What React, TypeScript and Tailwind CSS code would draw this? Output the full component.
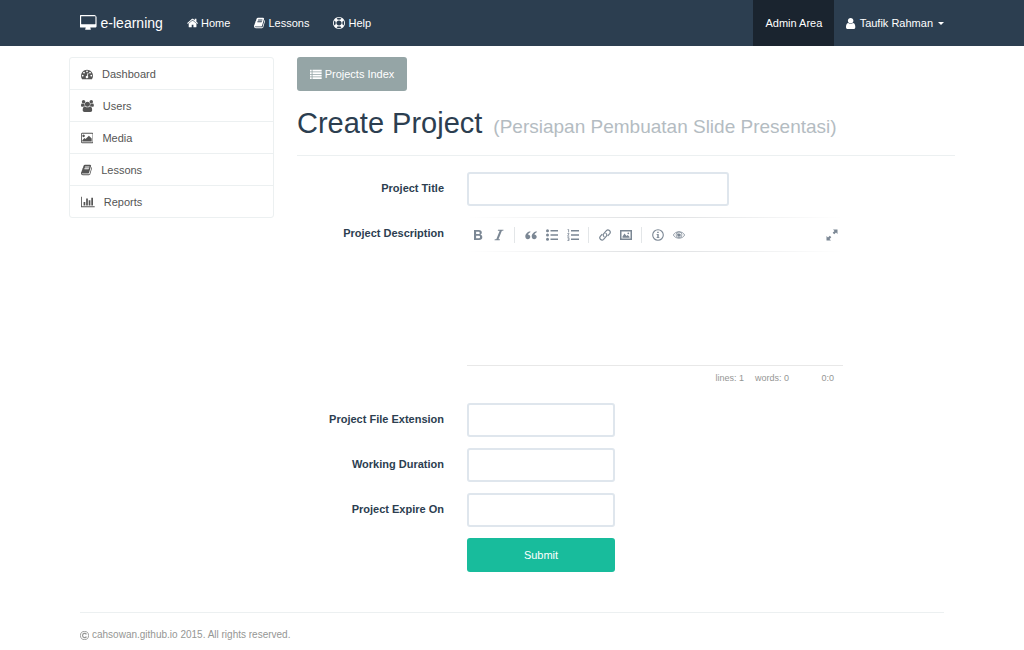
import React from "react";

type IconProps = { className?: string };

type GlyphProps = IconProps & { box: string; d: string };

function Glyph({ box, d, className = "h-3" }: GlyphProps) {
  return (
    <svg viewBox={box} className={`${className} w-auto shrink-0`} fill="currentColor" aria-hidden="true">
      <path d={d} />
    </svg>
  );
}

const glyphs = {
  desktop: {
    box: "0 0 1856 1792",
    d: "M1728 992v-832q0-13-9.5-22.500t-22.500-9.500h-1536q-13 0-22.500 9.500t-9.500 22.500v832q0 13 9.500 22.500t22.500 9.500h1536q13 0 22.500-9.500t9.500-22.500zm128-832v1088q0 66-47 113t-113 47h-544q0 37 16 77.500t32 71 16 43.500q0 26-19 45t-45 19h-512q-26 0-45-19t-19-45q0-14 16-44t32-70 16-78h-544q-66 0-113-47t-47-113v-1088q0-66 47-113t113-47h1536q66 0 113 47t47 113z",
  },
  home: {
    box: "64 0 1664 1792",
    d: "M1472 992v480q0 26-19 45t-45 19h-384v-384h-256v384h-384q-26 0-45-19t-19-45v-480q0-1 .5-3t.5-3l575-474 575 474q1 2 1 6zm223-69l-62 74q-8 9-21 11h-3q-13 0-21-7l-692-577-692 577q-12 8-24 7-13-2-21-11l-62-74q-8-10-7-23.500t11-21.500l719-599q32-26 76-26t76 26l244 204v-195q0-14 9-23t23-9h192q14 0 23 9t9 23v408l219 182q10 8 11 21.500t-7 23.500z",
  },
  book: {
    box: "64 0 1664 1792",
    d: "M1703 478q40 57 18 129l-275 906q-19 64-76.500 107.500t-122.500 43.500h-923q-77 0-148.500-53.500t-99.500-131.500q-24-67-2-127 0-4 3-27t4-37q1-8-3-21.500t-3-19.500q2-11 8-21t16.500-23.500 16.500-23.500q23-38 45-91.500t30-91.500q3-10 .5-30t-.5-28q3-11 17-28t17-23q21-36 42-92t25-90q1-9-2.500-32t.5-28q4-13 22-30.500t22-22.500q19-26 42.500-84.500t27.500-96.500q1-8-3-25.500t-2-26.500q2-8 9-18t18-23 17-21q8-12 16.500-30.500t15-35 16-36 19.500-32 26.500-23.500 36-11.500 47.500 5.500l-1 3q38-9 51-9h761q74 0 114 56t18 130l-274 906q-36 119-71.500 153.500t-128.500 34.500h-869q-27 0-38 15-11 16-1 43 24 70 144 70h923q29 0 56-15.500t35-41.500l300-987q7-22 5-57 38 15 59 43zm-1064 2q-4 13 2 22.500t20 9.500h608q13 0 25.500-9.500t16.500-22.500l21-64q4-13-2-22.500t-20-9.500h-608q-13 0-25.500 9.500t-16.500 22.500zm-83 256q-4 13 2 22.500t20 9.500h608q13 0 25.500-9.500t16.500-22.500l21-64q4-13-2-22.500t-20-9.500h-608q-13 0-25.500 9.500t-16.500 22.500z",
  },
  lifeRing: {
    box: "0 0 1792 1792",
    d: "M896 0q182 0 348 71t286 191 191 286 71 348-71 348-191 286-286 191-348 71-348-71-286-191-191-286-71-348 71-348 191-286 286-191 348-71zm0 128q-190 0-361 90l194 194q82-28 167-28t167 28l194-194q-171-90-361-90zm-678 1129l194-194q-28-82-28-167t28-167l-194-194q-90 171-90 361t90 361zm678 407q190 0 361-90l-194-194q-82 28-167 28t-167-28l-194 194q171 90 361 90zm0-384q159 0 271.500-112.500t112.500-271.500-112.500-271.500-271.500-112.500-271.500 112.500-112.500 271.500 112.500 271.500 271.500 112.500zm484-217l194 194q90-171 90-361t-90-361l-194 194q28 82 28 167t-28 167z",
  },
  user: {
    box: "256 0 1280 1792",
    d: "M1536 1399q0 109-62.500 187t-150.500 78h-854q-88 0-150.500-78t-62.500-187q0-85 8.500-160.500t31.500-152 58.500-131 94-89 134.500-34.500q131 128 313 128t313-128q76 0 134.500 34.500t94 89 58.500 131 31.500 152 8.500 160.500zm-256-887q0 159-112.500 271.500t-271.500 112.500-271.500-112.500-112.500-271.500 112.500-271.500 271.500-112.500 271.500 112.500 112.500 271.500z",
  },
  dashboard: {
    box: "0 0 1792 1792",
    d: "M384 1152q0-53-37.500-90.500t-90.500-37.500-90.500 37.500-37.500 90.500 37.500 90.500 90.500 37.500 90.500-37.500 37.500-90.500zm192-448q0-53-37.500-90.500t-90.500-37.500-90.500 37.500-37.500 90.500 37.500 90.500 90.500 37.500 90.500-37.500 37.500-90.500zm428 481l101-382q6-26-7.500-48.500t-38.500-29.500-48 6.500-30 39.500l-101 382q-60 5-107 43.500t-63 98.500q-20 77 20 146t117 89 146-20 89-117q16-60-6-117t-72-91zm660-33q0-53-37.500-90.500t-90.500-37.500-90.500 37.500-37.500 90.500 37.500 90.500 90.500 37.500 90.500-37.500 37.500-90.500zm-640-640q0-53-37.500-90.500t-90.500-37.500-90.500 37.500-37.500 90.500 37.500 90.500 90.500 37.500 90.500-37.500 37.500-90.500zm448 192q0-53-37.500-90.500t-90.500-37.500-90.500 37.500-37.500 90.500 37.500 90.500 90.500 37.500 90.500-37.500 37.500-90.500zm320 448q0 261-141 483-19 29-54 29h-1402q-35 0-54-29-141-221-141-483 0-182 71-348t191-286 286-191 348-71 348 71 286 191 191 286 71 348z",
  },
  users: {
    box: "0 0 1920 1792",
    d: "M593 896q-162 5-265 128h-134q-82 0-138-40.500t-56-118.500q0-353 124-353 6 0 43.500 21t97.500 42.500 119 21.500q67 0 133-23-5 37-5 66 0 139 81 256zm1071 637q0 120-73 189.500t-194 69.500h-874q-121 0-194-69.500t-73-189.500q0-53 3.500-103.500t14-109 26.500-108.500 43-97.500 62-81 85.500-53.500 111.500-20q10 0 43 21.500t73 48 107 48 135 21.500 135-21.500 107-48 73-48 43-21.500q61 0 111.500 20t85.500 53.500 62 81 43 97.500 26.500 108.500 14 109 3.500 103.500zm-1024-1277q0 106-75 181t-181 75-181-75-75-181 75-181 181-75 181 75 75 181zm704 384q0 159-112.500 271.500t-271.500 112.500-271.500-112.500-112.500-271.500 112.500-271.500 271.500-112.500 271.500 112.500 112.500 271.500zm576 225q0 78-56 118.500t-138 40.500h-134q-103-123-265-128 81-117 81-256 0-29-5-66 66 23 133 23 59 0 119-21.500t97.500-42.500 43.500-21q124 0 124 353zm-128-609q0 106-75 181t-181 75-181-75-75-181 75-181 181-75 181 75 75 181z",
  },
  picture: {
    box: "0 0 1856 1792",
    d: "M576 576q0 80-56 136t-136 56-136-56-56-136 56-136 136-56 136 56 56 136zm1024 384v448h-1408v-192l320-320 160 160 512-512zm96-704h-1536q-13 0-22.500 9.500t-9.500 22.500v1216q0 13 9.500 22.500t22.500 9.500h1536q13 0 22.500-9.500t9.500-22.500v-1216q0-13-9.500-22.500t-22.500-9.500zm160 32v1216q0 66-47 113t-113 47h-1536q-66 0-113-47t-47-113v-1216q0-66 47-113t113-47h1536q66 0 113 47t47 113z",
  },
  chart: {
    box: "0 0 2048 1792",
    d: "M640 896v512h-256v-512h256zm384-512v1024h-256v-1024h256zm1024 1152v128h-2048v-1536h128v1408h1920zm-640-896v768h-256v-768h256zm384-384v1152h-256v-1152h256z",
  },
  list: {
    box: "0 0 14 12",
    d: "M0 1h2v2H0zM3 1h11v2H3zM0 4h2v2H0zM3 4h11v2H3zM0 7h2v2H0zM3 7h11v2H3zM0 10h2v2H0zM3 10h11v2H3z",
  },
  bold: {
    box: "0 0 12 12",
    d: "M2 1H6.800c2 0 3 1.100 3 2.600 0 1-.5 1.800-1.400 2.200 1.200.3 1.900 1.200 1.900 2.400 0 1.700-1.200 2.800-3.200 2.800H2zM4.100 2.700v2.400h2.100c1 0 1.500-.4 1.500-1.200s-.5-1.200-1.500-1.200zM4.100 6.700v2.600h2.400c1 0 1.600-.5 1.600-1.300s-.6-1.300-1.600-1.300z",
  },
  italic: {
    box: "0 0 12 12",
    d: "M5 .8h5.500l-.2 1H8.900L5.500 10.200h1.500l-.3 1H1.500l.3-1h1.500L6.700 1.800H4.800z",
  },
  quote: {
    box: "0 0 12 12",
    d: "M5.300 2.200C3 2.600.3 4.500.3 7.600c0 1.600 1.100 2.600 2.500 2.600s2.500-1 2.500-2.400S4.200 5.400 2.900 5.400c.4-1 1.200-1.700 2.400-2.200zM11.700 2.200c-2.300.4-5 2.300-5 5.400 0 1.600 1.100 2.600 2.500 2.600s2.500-1 2.500-2.400-1.100-2.400-2.400-2.400c.4-1 1.200-1.700 2.400-2.200z",
  },
  expand: {
    box: "0 0 12 12",
    d: "M7 .5h4.500V5L10 3.500 8.200 5.300 6.700 3.800 8.500 2zM5 11.500H.5V7L2 8.500l1.800-1.800 1.500 1.500L3.500 10z",
  },
};

function UnorderedListIcon() {
  return (
    <svg viewBox="0 0 12 12" className="size-3" fill="currentColor" aria-hidden="true">
      <circle cx="1.500" cy="1.700" r="1.500" />
      <circle cx="1.500" cy="6" r="1.500" />
      <circle cx="1.500" cy="10.300" r="1.500" />
      <path d="M4.500 1H12v1.400H4.500zM4.500 5.300H12v1.400H4.500zM4.500 9.600H12v1.400H4.500z" />
    </svg>
  );
}

function OrderedListIcon() {
  return (
    <svg viewBox="0 0 12 12" className="size-3" fill="none" stroke="currentColor" aria-hidden="true">
      <path d="M4 1.700H12M4 6H12M4 10.300H12" strokeWidth="1.400" />
      <path d="M.6.500h1v2.900M.4 4.600h1.700L.6 7.200h1.700M.4 8.700h1.600v2.900H.4M.8 10.100H2" strokeWidth=".8" />
    </svg>
  );
}

function LinkIcon() {
  return (
    <svg viewBox="0 0 12 12" className="size-3" fill="none" stroke="currentColor" strokeWidth="1.200" strokeLinecap="round" aria-hidden="true">
      <path d="M5 7.600C3.900 6.700 4 5.500 4.800 4.600L7.400 1.700C9.200-.2 12.500 2.300 10.700 4.600L9 6.600" />
      <path d="M7 4.400c1.100.9 1 2.100.2 3L4.600 10.300C2.800 12.200-.5 9.700 1.300 7.400L3 5.400" />
    </svg>
  );
}

function ImageIcon() {
  return (
    <svg viewBox="0 0 12 12" className="size-3" fill="currentColor" aria-hidden="true">
      <path fillRule="evenodd" d="M0 1h12v10H0zM1.500 2.500v7h9v-7z" />
      <path d="M2.500 8.800V7.500l2-3L6.500 7l1.200-1 1.800 1.800v1z" />
      <circle cx="8.300" cy="4.300" r=".9" />
    </svg>
  );
}

function InfoIcon() {
  return (
    <svg viewBox="0 0 12 12" className="size-3" fill="currentColor" aria-hidden="true">
      <circle cx="6" cy="6" r="5.300" fill="none" stroke="currentColor" strokeWidth="1.100" />
      <path d="M5.200 2.700h1.500v1.300H5.200zM4.600 4.900h2.100v3.300h.7V9H4.600v-.8h.7V5.700h-.7z" />
    </svg>
  );
}

function EyeIcon() {
  return (
    <svg viewBox="0 0 12 12" className="size-3" fill="none" stroke="currentColor" aria-hidden="true">
      <path d="M.4 6C2.300 1.700 9.700 1.700 11.600 6 9.700 10.300 2.300 10.300.4 6z" strokeWidth=".8" />
      <circle cx="6" cy="5.800" r="2.900" strokeWidth=".7" />
      <path d="M4.200 4.500h2.200l1.400 1.100C7.900 8.500 4.500 8.500 4.200 6z" fill="currentColor" stroke="none" />
    </svg>
  );
}

function CopyrightIcon() {
  return (
    <svg viewBox="0 0 12 12" className="size-[9px] shrink-0" fill="none" stroke="currentColor" aria-hidden="true">
      <circle cx="6" cy="6" r="5.400" strokeWidth="1.200" />
      <path d="M8.600 4.500C7.500 2.400 3.400 2.600 3.400 6s4.100 3.600 5.200 1.500" strokeWidth="1.500" />
    </svg>
  );
}

const navLinks = [
  { label: "Home", glyph: glyphs.home },
  { label: "Lessons", glyph: glyphs.book },
  { label: "Help", glyph: glyphs.lifeRing },
];

const sideLinks = [
  { label: "Dashboard", glyph: glyphs.dashboard },
  { label: "Users", glyph: glyphs.users },
  { label: "Media", glyph: glyphs.picture },
  { label: "Lessons", glyph: glyphs.book },
  { label: "Reports", glyph: glyphs.chart },
];

function Navbar() {
  return (
    <header className="bg-[#2c3e50] text-white">
      <nav className="mx-auto flex h-[46px] max-w-[886px] items-stretch px-[11px]">
        <a href="#" className="flex items-center gap-1 pr-3 text-sm">
          <Glyph {...glyphs.desktop} className="h-4" />
          e-learning
        </a>
        {navLinks.map((link) => (
          <a key={link.label} href="#" className="flex items-center gap-[3px] px-3">
            <Glyph {...link.glyph} />
            {link.label}
          </a>
        ))}
        <a href="#" className="ml-auto flex items-center bg-[#1a242f] px-3">
          Admin Area
        </a>
        <button type="button" className="flex items-center gap-1 pl-3">
          <Glyph {...glyphs.user} className="h-[13px]" />
          Taufik Rahman
          <svg viewBox="0 0 6 3" className="ml-px w-1.5" fill="currentColor" aria-hidden="true">
            <path d="M0 0h6L3 3z" />
          </svg>
        </button>
      </nav>
    </header>
  );
}

function Sidebar() {
  return (
    <ul className="w-[205px] shrink-0 divide-y divide-[#ecf0f1] self-start rounded-[3px] border border-[#ecf0f1]">
      {sideLinks.map((link) => (
        <li key={link.label}>
          <a href="#" className="flex h-[31px] items-center gap-[9px] px-[11px] text-[#555555]">
            <Glyph {...link.glyph} />
            {link.label}
          </a>
        </li>
      ))}
    </ul>
  );
}

function Tool({ label, children }: { label: string; children: React.ReactNode }) {
  return (
    <button type="button" aria-label={label} className="flex h-full w-[21px] items-center justify-center">
      {children}
    </button>
  );
}

function Separator() {
  return <span className="mx-[5px] h-4 w-px bg-[#e3e6e8]" />;
}

function FadeLine() {
  return <div className="h-px bg-linear-to-r from-transparent via-[#dddfe1] to-transparent" />;
}

function Editor() {
  return (
    <div className="mb-[3px] max-w-[376px]">
      <FadeLine />
      <div className="flex h-[33px] items-center pr-px text-[#7b8794]">
        <Tool label="Bold"><Glyph {...glyphs.bold} /></Tool>
        <Tool label="Italic"><Glyph {...glyphs.italic} /></Tool>
        <Separator />
        <Tool label="Quote"><Glyph {...glyphs.quote} /></Tool>
        <Tool label="Unordered list"><UnorderedListIcon /></Tool>
        <Tool label="Ordered list"><OrderedListIcon /></Tool>
        <Separator />
        <Tool label="Link"><LinkIcon /></Tool>
        <Tool label="Image"><ImageIcon /></Tool>
        <Separator />
        <Tool label="Info"><InfoIcon /></Tool>
        <Tool label="Preview"><EyeIcon /></Tool>
        <div className="ml-auto h-full">
          <Tool label="Fullscreen"><Glyph {...glyphs.expand} /></Tool>
        </div>
      </div>
      <FadeLine />
      <textarea id="description" className="block h-[113px] w-full resize-none p-2 outline-none" />
      <div className="flex h-6 items-center justify-end gap-[11px] border-t border-[#e8e8e8] pr-[9px] text-[9px] text-[#959694]">
        <span>lines: 1</span>
        <span>words: 0</span>
        <span className="w-[34px] text-right">0:0</span>
      </div>
    </div>
  );
}

function Field({ id, label, children }: { id: string; label: string; children: React.ReactNode }) {
  return (
    <div className="grid grid-cols-[147px_1fr] gap-x-[23px]">
      <label htmlFor={id} className="pt-2 text-right font-bold leading-4">
        {label}
      </label>
      {children}
    </div>
  );
}

const inputClass = "h-[34px] w-full rounded-[3px] border-2 border-[#dfe6ed] bg-white px-2 outline-none";

export default function App() {
  return (
    <div className="bg-white font-['Liberation_Sans',Arial,sans-serif] text-[11px] leading-4 text-[#2c3e50]">
      <Navbar />
      <div className="mx-auto flex max-w-[886px] gap-[23px] pt-[11px]">
        <Sidebar />
        <main className="min-w-0 flex-1">
          <a
            href="#"
            className="inline-flex h-[34px] items-center gap-[3px] rounded-[3px] bg-[#95a5a6] px-[13px] align-top text-white"
          >
            <Glyph {...glyphs.list} className="h-2.5" />
            Projects Index
          </a>
          <h1 className="mt-[15px] flex flex-wrap items-baseline gap-x-[11px] border-b border-[#ecf0f1] pb-[11px] text-[29px] leading-[34px]">
            Create Project
            <small className="text-[19px] text-[#b4bcc2]">(Persiapan Pembuatan Slide Presentasi)</small>
          </h1>
          <form className="mt-4 flex flex-col gap-[11px]">
            <Field id="title" label="Project Title">
              <input id="title" type="text" className={`${inputClass} max-w-[262px]`} />
            </Field>
            <Field id="description" label="Project Description">
              <Editor />
            </Field>
            <Field id="extension" label="Project File Extension">
              <input id="extension" type="text" className={`${inputClass} max-w-[148px]`} />
            </Field>
            <Field id="duration" label="Working Duration">
              <input id="duration" type="text" className={`${inputClass} max-w-[148px]`} />
            </Field>
            <Field id="expire" label="Project Expire On">
              <input id="expire" type="text" className={`${inputClass} max-w-[148px]`} />
            </Field>
            <button type="submit" className="ml-[170px] h-[34px] max-w-[148px] rounded-[3px] bg-[#18bc9c] text-white">
              Submit
            </button>
          </form>
        </main>
      </div>
      <div className="mx-auto mt-10 max-w-[886px] px-[11px]">
        <footer className="flex items-center gap-[3px] border-t border-[#ecf0f1] pt-[14px] text-[10px] text-[#959694]">
          <CopyrightIcon />
          cahsowan.github.io 2015. All rights reserved.
        </footer>
      </div>
    </div>
  );
}
